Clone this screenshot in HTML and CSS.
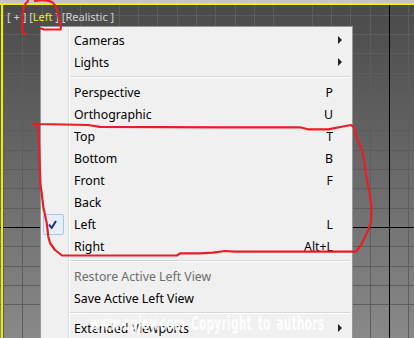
FILE: index.html
```html
<!DOCTYPE html>
<html lang="en">
<head>
    <meta charset="UTF-8">
    <title>Viewport menu</title>
    <link rel="stylesheet" href="styles.css">
</head>
<body>

    <div class="viewport">
        <div class="vp-label"><span>[ + ]</span> <span>[<em>Left</em> ]</span> <span>[Realistic ]</span></div>

        <div class="menu">
            <div class="item"><span class="check"></span><span class="text">Cameras</span><span class="key"></span><span class="sub arrow"></span></div>
            <div class="item"><span class="check"></span><span class="text">Lights</span><span class="key"></span><span class="sub arrow"></span></div>
            <div class="sep"></div>
            <div class="item"><span class="check"></span><span class="text">Perspective</span><span class="key">P</span><span class="sub"></span></div>
            <div class="item"><span class="check"></span><span class="text">Orthographic</span><span class="key">U</span><span class="sub"></span></div>
            <div class="item"><span class="check"></span><span class="text">Top</span><span class="key">T</span><span class="sub"></span></div>
            <div class="item"><span class="check"></span><span class="text">Bottom</span><span class="key">B</span><span class="sub"></span></div>
            <div class="item"><span class="check"></span><span class="text">Front</span><span class="key">F</span><span class="sub"></span></div>
            <div class="item"><span class="check"></span><span class="text">Back</span><span class="key"></span><span class="sub"></span></div>
            <div class="item">
                <span class="check on">
                    <svg width="19" height="19" viewBox="0 0 19 19"><path d="M5 9.5 L7.6 13 L12 6" fill="none" stroke="#1c2d8c" stroke-width="2" stroke-linejoin="round"/></svg>
                </span>
                <span class="text">Left</span><span class="key">L</span><span class="sub"></span>
            </div>
            <div class="item"><span class="check"></span><span class="text">Right</span><span class="key">Alt+L</span><span class="sub"></span></div>
            <div class="sep"></div>
            <div class="item disabled"><span class="check"></span><span class="text">Restore Active Left View</span><span class="key"></span><span class="sub"></span></div>
            <div class="item"><span class="check"></span><span class="text">Save Active Left View</span><span class="key"></span><span class="sub"></span></div>
            <div class="sep"></div>
            <div class="item"><span class="check"></span><span class="text">Extended Viewports</span><span class="key"></span><span class="sub arrow"></span></div>
        </div>
    </div>

    <div class="watermark">www.cgjoy.com Copyright to authors</div>

    <!-- red pen marks drawn over the screenshot -->
    <svg class="marks" width="414" height="338" viewBox="0 0 414 338">
        <g fill="none" stroke="#ec1c24" stroke-width="2.2" stroke-linejoin="round" stroke-linecap="round">
            <path d="M28 1 Q23 5 22.6 14 L22.3 30 Q22.5 34 26 34"/>
            <path d="M35 1 Q45 -1 52 2 Q57 6 58 14 Q59 22 61 27 L60.5 29.5 L44 29.5 L41 28.5"/>
            <polyline points="33,123.5 40,124 88,125 100,126.8 220,127.3 300,127.3 308,129.3 328,129.3 343,126.5 351,125 354.5,128 356.5,138 362,150 364,160 366,175 369.5,192 371.5,207 371,222 368,231 364,239 361,245 357,250.5 355,251.7 235,251.7 225,251 213,252.7 200,253.3 180,253.3 177,255.5 62,255.5 55,250 50,243 48.3,236.7 46.7,223 43.3,207 41.7,193 40.5,185 38.3,128 36,124"/>
        </g>
    </svg>

</body>
</html>
```

FILE: styles.css
```css
body {
    margin: 0;
    height: 338px;
    overflow: hidden;
    position: relative;
    background-color: #c4c4c4;
    font-family: "Noto Sans", "Liberation Sans", sans-serif;
}

.viewport {
    position: relative;
    margin-top: 3px;
    height: 330px;
    padding: 5px 7px 0;
    border-top: 2px solid #f2ee00;
    background:
        linear-gradient(#f2ee00, #f2ee00) 1px 0 / 2px 100% no-repeat,
        linear-gradient(#000, #000) 389px 0 / 1px 100% no-repeat,
        linear-gradient(#000, #000) 0 222px / 100% 1px no-repeat,
        repeating-linear-gradient(to right, transparent 0 3px, #5d5d5d 3px 4px, transparent 4px 19.3px),
        repeating-linear-gradient(to bottom, transparent 0 9.7px, #5d5d5d 9.7px 10.7px, transparent 10.7px 19.3px),
        linear-gradient(#4a4a4a, #898989);
}

.vp-label {
    font-size: 11px;
    line-height: 14px;
    color: #d4d4d4;
}

.vp-label em {
    font-style: normal;
    color: #f2e33a;
}

/* context menu */
.menu {
    position: absolute;
    left: 40px;
    top: 21px;
    width: 313px;
    height: 330px;
    box-sizing: border-box;
    padding: 2px;
    border: 1px solid #979797;
    background:
        linear-gradient(#dcdcdc, #dcdcdc) 27px 0 / 1px 100% no-repeat,
        linear-gradient(#fff, #fff) 28px 0 / 1px 100% no-repeat,
        #f0f0f0;
    font-size: 12.3px;
    color: #000;
}

.item {
    display: flex;
    align-items: center;
    height: 22px;
}

.check {
    width: 21px;
    height: 21px;
    box-sizing: border-box;
    margin-right: 10px;
    flex-shrink: 0;
}

.check.on {
    display: flex;
    align-items: center;
    justify-content: center;
    border: 1px solid #a9c6ea;
    border-radius: 2px;
    background-color: #e6eef9;
}

.text {
    flex: 1;
}

.key {
    text-align: right;
}

.sub {
    width: 17px;
    flex-shrink: 0;
}

.arrow::after {
    content: "";
    display: block;
    margin-left: 5px;
    width: 0;
    height: 0;
    border-left: 4px solid #222;
    border-top: 4px solid transparent;
    border-bottom: 4px solid transparent;
}

.disabled {
    color: #6d6d6d;
}

.sep {
    height: 8px;
    box-sizing: border-box;
    margin-left: 27px;
    padding-top: 3px;
}

.sep::after {
    content: "";
    display: block;
    border-top: 1px solid #d7d7d7;
    border-bottom: 1px solid #fff;
}

.watermark {
    position: absolute;
    left: 90px;
    top: 312px;
    font-family: "Liberation Sans Narrow", "DejaVu Sans Condensed", sans-serif;
    font-weight: bold;
    font-size: 19px;
    letter-spacing: 0.6px;
    word-spacing: 3px;
    white-space: nowrap;
    color: rgba(255, 255, 255, 0.9);
    transform: scaleX(0.61);
    transform-origin: left center;
}

.marks {
    position: absolute;
    left: 0;
    top: 0;
    pointer-events: none;
}
```
